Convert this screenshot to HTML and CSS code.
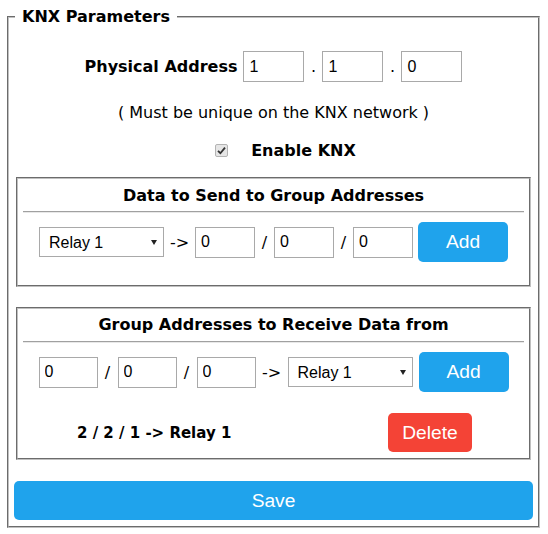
FILE: index.html
```html
<!DOCTYPE html>
<html>
<head>
<meta charset="utf-8">
<link rel="stylesheet" href="styles.css">
</head>
<body>
<fieldset class="outer">
  <legend>KNX Parameters</legend>
  <div class="addr">
    <label>Physical Address</label>
    <input class="txt" type="text" value="1">
    <span class="dot">.</span>
    <input class="txt" type="text" value="1">
    <span class="dot">.</span>
    <input class="txt" type="text" value="0">
  </div>
  <p class="note">( Must be unique on the KNX network )</p>
  <div class="enable">
    <span class="check"><svg width="9" height="9" viewBox="0 0 9 9"><path d="M1 4.8 L3.4 7.2 L8 1.6" fill="none" stroke="#333" stroke-width="1.8"/></svg></span>
    <span>Enable KNX</span>
  </div>

  <fieldset class="box box1">
    <div class="box-title">Data to Send to Group Addresses</div>
    <hr>
    <div class="row">
      <span class="sel"><select><option>Relay 1</option></select></span>
      <span class="sep arrow">-&gt;</span>
      <input class="txt w60" type="text" value="0">
      <span class="sep">/</span>
      <input class="txt w60" type="text" value="0">
      <span class="sep">/</span>
      <input class="txt w60" type="text" value="0">
      <button class="btn add">Add</button>
    </div>
  </fieldset>

  <fieldset class="box box2">
    <div class="box-title">Group Addresses to Receive Data from</div>
    <hr>
    <div class="row">
      <input class="txt w59" type="text" value="0">
      <span class="sep s20">/</span>
      <input class="txt w59" type="text" value="0">
      <span class="sep s20">/</span>
      <input class="txt w59" type="text" value="0">
      <span class="sep arrow2">-&gt;</span>
      <span class="sel"><select><option>Relay 1</option></select></span>
      <button class="btn add add2">Add</button>
    </div>
    <div class="del-row">
      <span class="entry">2 / 2 / 1 -&gt; Relay 1</span>
      <button class="btn del">Delete</button>
    </div>
  </fieldset>

  <button class="btn save">Save</button>
</fieldset>
</body>
</html>
```
FILE: styles.css
```css
html, body {
  margin: 0;
  padding: 0;
  background: #fff;
}
body {
  font-family: "DejaVu Sans", Verdana, sans-serif;
  font-size: 16px;
  color: #000;
  padding: 7px 0 0 7px;
}
.outer {
  margin: 0;
  width: 533px;
  box-sizing: border-box;
  padding: 0 5px 6px 5px;
  border: 2px groove #c0c0c0;
  min-width: 0;
}
.outer > legend {
  font-weight: bold;
  padding: 0 7px;
  margin-left: 1px;
  line-height: 19px;
}
.addr {
  display: flex;
  justify-content: center;
  align-items: center;
  margin-top: 25px;
}
.addr label {
  font-weight: bold;
  margin-right: 6px;
}
.dot {
  width: 18px;
  text-align: center;
}
.txt {
  width: 61px;
  height: 31px;
  box-sizing: border-box;
  border: 1px solid #a9a9a9;
  padding: 0 5px;
  margin: 0;
  font: 16px "Liberation Sans", Arial, sans-serif;
  color: #000;
  background: #fff;
  outline: none;
}
.w60 { width: 60px; }
.w59 { width: 59px; }
.note {
  margin: 21px 0 0;
  text-align: center;
  line-height: 19px;
}
.enable {
  display: flex;
  justify-content: center;
  align-items: center;
  margin-top: 19px;
  padding-left: 24px;
  font-weight: bold;
  line-height: 19px;
}
.check {
  width: 13px;
  height: 13px;
  box-sizing: border-box;
  border: 1px solid #b4b4b4;
  border-radius: 2px;
  background: #e6e6e6;
  margin-right: 23px;
  display: flex;
  align-items: center;
  justify-content: center;
}
.check svg { display: block; }
.box {
  margin: 17px 2px 0;
  padding: 7px 5px 23px;
  border: 2px groove #c0c0c0;
  min-width: 0;
}
.box hr {
  margin: 6px 0 9px;
}
.box2 {
  margin-top: 20px;
  padding-top: 6px;
  padding-bottom: 6px;
}
.box2 hr {
  margin-top: 7px;
}
.box-title {
  text-align: center;
  font-weight: bold;
  line-height: 19px;
}
hr {
  border: 0;
  border-top: 1px solid #a0a0a0;
  border-bottom: 1px solid #e8e8e8;
}
.row {
  display: flex;
  justify-content: center;
  align-items: center;
}
.sel {
  position: relative;
  display: block;
  width: 125px;
  height: 30px;
}
.sel select {
  appearance: none;
  -webkit-appearance: none;
  width: 100%;
  height: 30px;
  box-sizing: border-box;
  border: 1px solid #a9a9a9;
  border-radius: 0;
  background: #fff;
  padding: 0 9px;
  margin: 0;
  font: 16px "Liberation Sans", Arial, sans-serif;
  color: #000;
}
.sel::after {
  content: "";
  position: absolute;
  right: 7px;
  top: 13px;
  border-left: 3px solid transparent;
  border-right: 3px solid transparent;
  border-top: 5px solid #222;
  pointer-events: none;
}
.sep {
  width: 19px;
  text-align: center;
  font-family: "DejaVu Sans", Verdana, sans-serif;
}
.s20 { width: 20px; }
.arrow { width: 31px; }
.arrow2 { width: 32px; }
.btn {
  border: 0;
  border-radius: 5px;
  background: #1fa3ec;
  color: #fff;
  font: 19.2px "Liberation Sans", Arial, sans-serif;
  height: 40px;
  padding: 0;
  margin: 0;
}
.add {
  width: 90px;
  margin-left: 5px;
}
.add2 { margin-left: 6px; }
.del-row {
  display: flex;
  align-items: center;
  margin-top: 21px;
}
.entry {
  font-weight: bold;
  font-size: 15px;
  margin-left: 54px;
}
.del {
  width: 84px;
  height: 39px;
  background: #f44336;
  margin-left: auto;
  margin-right: 52px;
}
.save {
  display: block;
  width: 100%;
  height: 39px;
  margin-top: 21px;
  line-height: 37px;
}
```
